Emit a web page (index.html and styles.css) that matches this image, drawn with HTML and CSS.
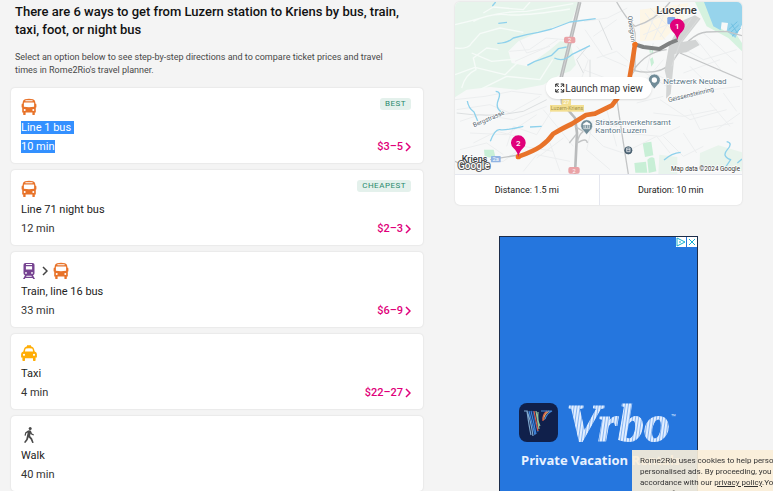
FILE: index.html
```html
<!DOCTYPE html>
<html lang="en">
<head>
<meta charset="utf-8">
<meta name="viewport" content="width=device-width, initial-scale=1">
<title>Luzern station to Kriens</title>
<link rel="stylesheet" href="styles.css">
</head>
<body>
<svg class="sprite" aria-hidden="true">
  <symbol id="bus" viewBox="0 0 16 18">
    <path fill-rule="evenodd" d="M4 1.2Q8 .4 12 1.2Q14 1.6 14.3 4V5.6Q15.4 5.7 15.4 6.8V9Q15.4 9.6 14.8 9.6V14.6H13.8V16.6Q13.8 17 13.4 17H12Q11.4 17 11.4 16.4V14.6H4.6V16.4Q4.600 17 4 17H2.600Q2.200 17 2.200 16.600V14.600H1.200V9.600Q.6 9.600.6 9V6.800Q.6 5.700 1.700 5.600V4Q2 1.600 4 1.200ZM4.400 2.300V3.200H11.600V2.300ZM3.400 4.600Q2.900 4.600 2.900 5.200V8.800Q8 9.600 13.100 8.800V5.200Q13.100 4.600 12.600 4.600ZM3.700 11A1 1 0 1 0 3.700 13A1 1 0 1 0 3.700 11ZM12.300 11A1 1 0 1 0 12.300 13A1 1 0 1 0 12.300 11Z"/>
  </symbol>
  <symbol id="train" viewBox="0 0 16 18">
    <path fill-rule="evenodd" d="M4.500 1H11.500Q13.500 1 13.500 2.800V11.300Q13.500 13 12 13.300L14 17H12.200L11.600 16H4.400L3.800 17H2L4 13.300Q2.500 13 2.500 11.300V2.800Q2.500 1 4.500 1ZM5 2V2.900H11V2ZM4.900 4.200V7.600H11.100V4.200ZM5 10A.9.900 0 1 0 5 11.800A.9.900 0 1 0 5 10ZM11 10A.9.900 0 1 0 11 11.800A.9.900 0 1 0 11 10ZM5.600 13.700L5.100 14.800H10.900L10.400 13.700Z"/>
  </symbol>
  <symbol id="taxi" viewBox="0 0 16 18">
    <path fill-rule="evenodd" d="M6 2.300V1.300H10V2.300L11.500 3Q12.600 3.500 13 5L13.700 7.500Q15.900 8 15.900 10V13.600H14.600V16.200Q14.600 16.900 13.900 16.900H12.600Q12 16.900 12 16.200V14.300H4V16.200Q4 16.900 3.400 16.900H2.100Q1.400 16.900 1.400 16.200V13.600H.1V10Q.1 8 2.300 7.500L3 5Q3.400 3.500 4.500 3ZM5 4.500Q4.600 4.600 4.400 5.300L3.900 7.400H12.100L11.600 5.300Q11.400 4.600 11 4.500Q8 3.800 5 4.500ZM3 9.700A1.100 1.100 0 1 0 3 11.900A1.100 1.100 0 1 0 3 9.700ZM13 9.700A1.100 1.100 0 1 0 13 11.900A1.100 1.100 0 1 0 13 9.700Z"/>
  </symbol>
  <symbol id="walk" viewBox="0 0 16 18">
    <circle cx="9.200" cy="2.500" r="1.500"/>
    <path d="M7 4.600 9 4.300Q10 4.500 10.300 5.700L11 7.400 13 8.500 12.500 9.600 10.200 8.500 9.600 7.500 9.100 10.100 11.200 12.600 12.700 16.700 11.200 17 9.700 13.400 7.600 11.300 6.700 14 4.300 17 3 16.200 5.200 13.300 6.700 6.500 5.300 7.300 4.700 9.700 3.500 9.500 4.200 6.400Z"/>
  </symbol>
  <symbol id="chevron" viewBox="0 0 6 10">
    <path d="M1 1 5 5 1 9" fill="none" stroke="currentColor" stroke-width="1.500"/>
  </symbol>
  <symbol id="pin" viewBox="0 0 44 64" overflow="visible">
    <path d="M22 64C20 51 14 44 8 38A22 22 0 1 1 36 38C30 44 24 51 22 64Z"/>
  </symbol>
</svg>

<main class="page">
  <section class="routes">
    <header class="intro">
      <h1>There are 6 ways to get from Luzern station to Kriens by bus, train, taxi, foot, or night bus</h1>
      <p>Select an option below to see step-by-step directions and to compare ticket prices and travel times in Rome2Rio's travel planner.</p>
    </header>
    <ul class="route-list">
      <li><a class="card" href="#line-1">
        <span class="modes"><svg class="mode bus"><use href="#bus"/></svg><span class="tag">BEST</span></span>
        <span class="name"><mark>Line 1 bus&nbsp;</mark></span>
        <span class="summary"><mark>10 min</mark><span class="price">$3–5 <svg class="chev"><use href="#chevron"/></svg></span></span>
      </a></li>
      <li><a class="card" href="#line-71">
        <span class="modes"><svg class="mode bus"><use href="#bus"/></svg><span class="tag">CHEAPEST</span></span>
        <span class="name">Line 71 night bus</span>
        <span class="summary">12 min<span class="price">$2–3 <svg class="chev"><use href="#chevron"/></svg></span></span>
      </a></li>
      <li><a class="card" href="#train-ride">
        <span class="modes"><svg class="mode train"><use href="#train"/></svg><svg class="chev then"><use href="#chevron"/></svg><svg class="mode bus"><use href="#bus"/></svg></span>
        <span class="name">Train, line 16 bus</span>
        <span class="summary">33 min<span class="price">$6–9 <svg class="chev"><use href="#chevron"/></svg></span></span>
      </a></li>
      <li><a class="card" href="#taxi-ride">
        <span class="modes"><svg class="mode taxi"><use href="#taxi"/></svg></span>
        <span class="name">Taxi</span>
        <span class="summary">4 min<span class="price">$22–27 <svg class="chev"><use href="#chevron"/></svg></span></span>
      </a></li>
      <li><a class="card" href="#on-foot">
        <span class="modes"><svg class="mode walk"><use href="#walk"/></svg></span>
        <span class="name">Walk</span>
        <span class="summary">40 min</span>
      </a></li>
    </ul>
  </section>

  <aside class="side">
    <section class="map-card">
      <div class="map">
        <svg class="map-art" viewBox="15 7 861 516" role="img" aria-label="Route map from Lucerne to Kriens">
          <rect x="15" y="7" width="861" height="516" fill="#f7f8f8"/>
          <path fill="#e6f4eb" d="M15 7H385L365 65 265 98 205 125 175 155 185 190 232 200 300 150 330 125 360 128 378 195 360 215 330 225 280 255 200 270 120 262 50 270 15 293Z"/>
          <path fill="#e8f4ec" d="M628 465 682 472 682 523H625ZM750 460 805 437 876 458V515L748 505Z"/>
          <path fill="#c8efd6" d="M102 450H131L137 475 104 472ZM578 430 604 426 610 467 585 472ZM553 490 588 486 592 519 556 519ZM592 480Q605 468 613 476L619 515 596 520ZM598 150l10-4 2 14-10 3zM600 178l8-5 4 16-8 12z"/>
          <path fill="#fdf6e6" d="M570 30 715 10 700 60 640 120 570 125Z"/>
          <path fill="#d5f2df" d="M735 7H765L790 70 825 95 850 90 876 130V155L835 115 770 80Z"/>
          <path fill="#97d4ec" d="M762 7H876V75L856 115 830 95 834 70 815 68 812 92 790 80Z"/>
          <path class="pier" d="m836 90 26-24m-22 34 26-24m-20 34 26-24m-28-14 18 28"/>
          <g class="trail">
            <path d="M15 75Q60 65 110 50T230 35L370 12M70 65Q120 40 170 45T360 28M100 40l30-18 90 8 20-23M15 145Q55 150 65 130L90 102 150 85 220 98M35 265Q45 225 78 210L70 175 110 145 145 150M65 160l60 25 90-8M15 225l60-22 90 22 50-48M90 270l80-40 100 10 38-60"/>
          </g>
          <g class="street">
            <path d="M178 155l60-5 50-35 60 5M195 185l90-40 38-25M200 105l30 55 70-20M380 140l35 40-20 55-45 40M402 65l70-10 60-30M405 90l55 80 70 30M430 110l70-50M440 175l60-20 35 30M400 210l80 30M15 300l90-10 80-15 90 10M20 330l100-15 60 25 90-50M30 365l60-20 100 15 100-40M60 400l110 5 90-60M170 440l20-60 70 25 50-80M70 430l70-35 80 20M30 450l80-20 50 35M60 490l100-5 60-45 90 15M220 515l40-50 100 20M260 475l80-60M280 330l90 110M300 430l30 85M400 380l60 60 60 20M430 360l-20 90 70 60M470 330l30 110M520 400l110 10 60-30M540 450l80-40 40 50M640 410l60 60 60-30M700 400l40 60M610 340l90 10 100-20M630 300l90 60 110-30M720 330l30 60 100-20M780 310l60 70M660 125l100 55 100-30M700 220l110-40M720 200l70 70 80-10M740 120l80 100M760 100l100 90M585 40l60 80M600 25l70 70M575 75l90-40M580 105l95-40M625 20l-40 100M655 15l-45 105M690 12l-60 100M570 210l80 50M580 250l60-70M610 130l-20 80 60 30M560 310l80-20M800 390l70-50M820 280l40 55"/>
          </g>
          <path class="road thin" d="M20 340Q120 355 220 335L290 300M447 62 486 151M413 140l-33 40 20 40M420 180v65M500 380l-40-20"/>
          <path class="road wide" d="M389 7 363 115 332 240"/>
          <path class="road ramp" d="M332 240 336 310 375 355 381 400 375 523"/>
          <path class="road-gap" d="M389 7 363 115 332 240"/>
          <path class="road mid" d="M375 380 400 395Q385 405 382 430Q410 412 412 430M358 430 378 405"/>
          <path class="road mid" d="M500 7Q530 60 555 80Q620 60 660 7M545 65 555 100V210L500 295Q515 400 535 523M550 212Q590 155 650 150M550 212Q625 230 665 190Q720 100 770 97L830 95 876 108M690 160 876 240M15 485 45 500M120 480 205 466"/>
          <path fill="#d2d4d4" d="m700 62 35-15 17 10-55 70 40-7 12 16-40 22-35 5-12 120-14 14 2-60-6-25 14-80z"/>
          <path class="road-gap" d="M745 57 690 130 665 200M725 55 685 110"/>
          <g class="water">
            <path d="M142 131Q170 132 190 115L230 105 265 98 305 88 360 67 437 57M145 71l26-3M127 19l10-12M232 197Q250 185 270 180L305 167 325 147 350 142M313 175Q340 188 365 165L420 138M137 275Q155 275 145 300T154 337M52 304Q55 325 72 337L83 364M121 425Q135 387 150 390T220 380M240 382L275 380M642 481Q665 460 692 458M830 426Q850 430 832 450T842 480L825 505M862 490l14-12"/>
          </g>
          <path d="M555 134 580 142 628 148 660 130 682 121" fill="none" stroke="#7f8181" stroke-width="12" stroke-linejoin="round"/>
          <path d="M205 471 Q250 455 272 440T310 402Q345 382 365 373L408 346 435 342 486 317 505 292 537 245 548 180 555 134" fill="none" stroke="#e8732a" stroke-width="14" stroke-linecap="round" stroke-linejoin="round"/>
          <circle cx="555" cy="134" r="8" fill="#f0721f"/>
          <circle cx="205" cy="471" r="8" fill="#f0721f"/>
          <g class="shield">
            <rect x="342" y="111" width="34" height="20" rx="6" fill="#eaa2a6"/><text x="359" y="128">2</text>
            <rect x="355" y="502" width="34" height="20" rx="6" fill="#eaa2a6"/><text x="372" y="519">2</text>
            <rect x="123" y="469" width="29" height="19" rx="2" fill="#91b4e3"/><text x="137" y="485">2a</text>
            <rect x="335" y="298" width="28" height="19" fill="#f3df92"/><text x="349" y="314">27</text>
            <rect x="300" y="316" width="102" height="20" fill="#f3df92"/><text class="exit" x="351" y="332">Luzern-Kriens</text>
          </g>
          <rect x="652" y="52" width="24" height="22" rx="4" fill="#7fa6e8"/>
          <g fill="#718c98" stroke="#fff" stroke-width="2">
            <path d="M613 268 603 256A18 18 0 1 1 623 256Z"/>
            <path d="M410 405 400 393A18 18 0 1 1 420 393Z"/>
          </g>
          <circle cx="613" cy="241" r="8" fill="#fff"/>
          <path d="M400 373 410 367 420 373V375H400ZM402 377V385M407 377V385M413 377V385M418 377V385M400 387H420" stroke="#fff" stroke-width="2" fill="#fff"/>
          <circle cx="535" cy="452" r="11" fill="#52697b" stroke="#344b5b" stroke-width="2"/>
          <path d="M530 445H540V456H530ZM530 450H540" fill="none" stroke="#fff" stroke-width="2"/>
          <g class="label">
            <text class="city" x="619" y="44">Lucerne</text>
            <text class="town" x="35" y="486">Kriens</text>
            <text class="place" x="640" y="252">Netzwerk Neubad</text>
            <text class="place" x="436" y="377">Strassenverkehrsamt</text>
            <text class="place" x="436" y="401">Kanton Luzern</text>
            <text class="road-name" transform="translate(72 383) rotate(-23)">Bergstrasse</text>
            <text class="road-name" transform="translate(533 50) rotate(82)">Obergrun</text>
            <text class="road-name" transform="translate(656 308) rotate(-14)">Geissensteinring</text>
            <text class="credit" x="870" y="514">Map data ©2024 Google</text>
          </g>
          <text class="google" x="24" y="509">Google</text>
          <g fill="#e0007a">
            <use href="#pin" x="660" y="58" width="44" height="64"/>
            <use href="#pin" x="183" y="408" width="44" height="64"/>
          </g>
          <g class="pin-no"><text x="682" y="88">1</text><text x="205" y="438">2</text></g>
        </svg>
        <button class="launch" type="button">
          <svg class="expand" viewBox="0 0 10 10" aria-hidden="true"><path d="M1 4V1H4M1 1 4 4M6 1H9V4M9 1 6 4M1 6V9H4M1 9 4 6M9 6V9H6M9 9 6 6"/></svg>Launch map view
        </button>
      </div>
      <div class="facts"><span>Distance: 1.5 mi</span><span>Duration: 10 min</span></div>
    </section>

    <section class="ad" aria-label="Advertisement">
      <div class="ad-controls">
        <a href="#ad-info" aria-label="About this ad"><svg viewBox="0 0 10 10"><path d="M1 1 9 5 1 9ZM4 4V6"/></svg></a>
        <button type="button" aria-label="Close ad"><svg viewBox="0 0 10 10"><path d="M2 2 8 8M8 2 2 8"/></svg></button>
      </div>
      <div class="brand">
        <svg class="brand-icon" viewBox="0 0 39 39" aria-hidden="true">
          <rect width="39" height="39" rx="8" fill="#10204b"/>
          <g fill="none" stroke-width="1.200">
            <path stroke="#7fa8cf" d="M5 8H8Q10 23 12 32M8 8Q12 18 14 33"/>
            <path stroke="#3f83d8" d="M10 8Q13 20 16 32M12 8Q15 20 17 31"/>
            <path stroke="#255fb8" d="M14 8Q16 20 19 29"/>
            <path stroke="#e35d42" d="M15 8 19 28M28 8Q23 12 24 18"/>
            <path stroke="#94c49f" d="M17 8 20 26M19 9Q18 18 21 23"/>
            <path stroke="#e7a15d" d="M30 8Q24 12 25 17"/>
            <path stroke="#4588d8" d="M22 8H33Q28 10 26 16"/>
          </g>
        </svg>
        <svg class="wordmark" viewBox="0 0 118 46" role="img" aria-label="Vrbo">
          <defs><pattern id="stripes" width="3" height="6" patternUnits="userSpaceOnUse" patternTransform="skewX(-8)"><rect width="3" height="6" fill="#86b5f2"/><rect width="2" height="6" fill="#e2eeff"/></pattern></defs>
          <text class="wordmark-text" x="0" y="37" fill="url(#stripes)" stroke="url(#stripes)">Vrbo</text>
          <text class="tm" x="105" y="16">™</text>
        </svg>
      </div>
      <p class="tagline">Private Vacation Rentals</p>
    </section>
  </aside>
</main>

<div class="cookies" role="region" aria-label="Cookie notice">
  <p>Rome2Rio uses cookies to help personalise content and</p>
  <p>personalised ads. By proceeding, you agree to this in</p>
  <p>accordance with our <a href="#privacy">privacy policy</a>.You may</p>
  <p>opt out of personalised advertising at any time.</p>
</div>
</body>
</html>
```
FILE: styles.css
```css
* { box-sizing: border-box; }

body {
  margin: 0;
  height: 100vh;
  overflow: hidden;
  background: #f4f4f4;
  color: #333;
  font-family: Roboto, "Liberation Sans", sans-serif;
  font-size: 11px;
}

h1, p, ul { margin: 0; padding: 0; }

.sprite { position: absolute; width: 0; height: 0; }

.page {
  display: grid;
  grid-template-columns: minmax(0, 1fr) 287px;
  gap: 32px;
  padding: 2px 31px 0 11px;
}

.intro { padding: 1px 4px 11px; }

h1 {
  color: #111;
  font-size: 13px;
  font-weight: 500;
  line-height: 18px;
}

.intro p {
  margin-top: 12px;
  padding-right: 16px;
  color: #484848;
  font-size: 9px;
  line-height: 13px;
}

.route-list {
  display: grid;
  gap: 7px;
  list-style: none;
}

.card {
  display: block;
  padding: 10px 12px 7px 10px;
  border-radius: 4px;
  background: #fff;
  box-shadow: 0 0 2px rgba(0, 0, 0, .14);
  color: #333;
  text-decoration: none;
}

.modes {
  display: flex;
  align-items: center;
  height: 18px;
  margin-bottom: 2px;
}

.mode { width: 16px; height: 18px; }
.bus { fill: #e8732a; }
.train { fill: #764391; }
.taxi { fill: #ffad05; }
.walk { fill: #4a4a4a; }

.chev { width: 6px; height: 10px; }
.then { margin: 0 5px; color: #444; }

.tag {
  align-self: flex-start;
  margin-left: auto;
  padding: 0 5px;
  border-radius: 3px;
  background: #e4f1ec;
  color: #2a8a6c;
  font-size: 8px;
  line-height: 12px;
  letter-spacing: 0.5px;
}

.name {
  display: block;
  color: #222;
  line-height: 19px;
}

.summary {
  display: flex;
  justify-content: space-between;
  line-height: 19px;
}

mark {
  background: #3390ff;
  color: #fff;
  line-height: 13px;
}

.summary mark { align-self: center; }

.price {
  display: flex;
  align-items: center;
  gap: 2px;
  color: #e0007a;
  font-weight: 500;
}

.map-card {
  overflow: hidden;
  border-radius: 5px;
  background: #fff;
  box-shadow: 0 0 2px rgba(0, 0, 0, .14);
}

.map { position: relative; }
.map-art { display: block; width: 100%; }

.map-art path { stroke-linejoin: round; }
.trail path { fill: none; stroke: #f6fbf8; stroke-width: 4; }
.street path { fill: none; stroke: #eceeef; stroke-width: 3; }
.water path { fill: none; stroke: #8ed1ec; stroke-width: 4; }
.pier { fill: none; stroke: #6fc0e2; stroke-width: 3; }
.road { fill: none; stroke: #b9bbbc; }
.thin { stroke: #dcdfe0; stroke-width: 3; }
.mid { stroke: #c3c5c6; stroke-width: 4; }
.wide { stroke-width: 11; }
.ramp { stroke-width: 8; }
.road-gap { fill: none; stroke: #dedfdf; stroke-width: 2; }

.shield text {
  fill: #fff;
  font-size: 17px;
  text-anchor: middle;
}
.shield .exit { fill: #a3924d; font-size: 16px; }

.label text {
  fill: #5c7887;
  stroke: #fff;
  stroke-width: 4px;
  paint-order: stroke;
  font-size: 24px;
}
.label .city { fill: #35383c; font-size: 34px; font-weight: 500; }
.label .town { fill: #35383c; font-size: 27px; font-weight: 500; }
.label .road-name { fill: #52636d; font-size: 19px; }
.label .credit { fill: #333; font-size: 19px; text-anchor: end; }

.google {
  fill: #fff;
  stroke: #555;
  stroke-width: 6px;
  paint-order: stroke;
  font-size: 30px;
  font-weight: 500;
}

.pin-no text {
  fill: #fff;
  font-size: 24px;
  font-weight: 500;
  text-anchor: middle;
}

.launch {
  position: absolute;
  top: 50%;
  left: 50%;
  transform: translate(-50%, -50%);
  display: flex;
  align-items: center;
  gap: 1px;
  height: 22px;
  padding: 0 9px;
  border: 0;
  border-radius: 11px;
  background: #fff;
  box-shadow: 0 1px 2px rgba(0, 0, 0, .12);
  color: #333;
  font: 10px Roboto, sans-serif;
  white-space: nowrap;
}

.expand { width: 10px; height: 10px; }
.expand path { fill: none; stroke: #222; stroke-width: 1; }

.facts {
  display: grid;
  grid-template-columns: 1fr 1fr;
  border-top: 1px solid #e5e7ef;
  color: #222;
  font-size: 9px;
  line-height: 30px;
  text-align: center;
}
.facts span + span { border-left: 1px solid #e5e7ef; }

.ad {
  width: 199px;
  height: 600px;
  margin: 31px auto 0;
  border: 1px solid #1b2c49;
  background: #2576de;
}

.ad-controls {
  display: flex;
  justify-content: flex-end;
  gap: 1px;
}

.ad-controls a,
.ad-controls button {
  display: block;
  width: 10px;
  height: 10px;
  padding: 0;
  border: 0;
  background: #fff;
}

.ad-controls svg { display: block; width: 10px; height: 10px; }
.ad-controls path { fill: none; stroke: #18b0cf; stroke-width: 1; }

.brand {
  display: flex;
  align-items: flex-start;
  gap: 8px;
  margin-top: 156px;
  padding-left: 19px;
}

.brand-icon { flex: none; width: 39px; height: 39px; }
.wordmark { flex: none; width: 118px; height: 48px; }

.wordmark-text {
  font: italic bold 52px "Liberation Serif", serif;
  stroke-width: 1px;
}
.tm { fill: #cfe2ff; font-size: 8px; }

.tagline {
  padding-left: 21px;
  color: #e9f2ff;
  font: bold 13px/18px "Open Sans", sans-serif;
  white-space: nowrap;
}

.cookies {
  position: fixed;
  top: 450px;
  left: 632px;
  right: 0;
  overflow: hidden;
  padding: 5px 0 8px 8px;
  background: rgba(251, 239, 216, .91);
  color: #333;
  font-size: 8px;
  line-height: 11px;
  white-space: nowrap;
}
.cookies a { color: inherit; }
```
